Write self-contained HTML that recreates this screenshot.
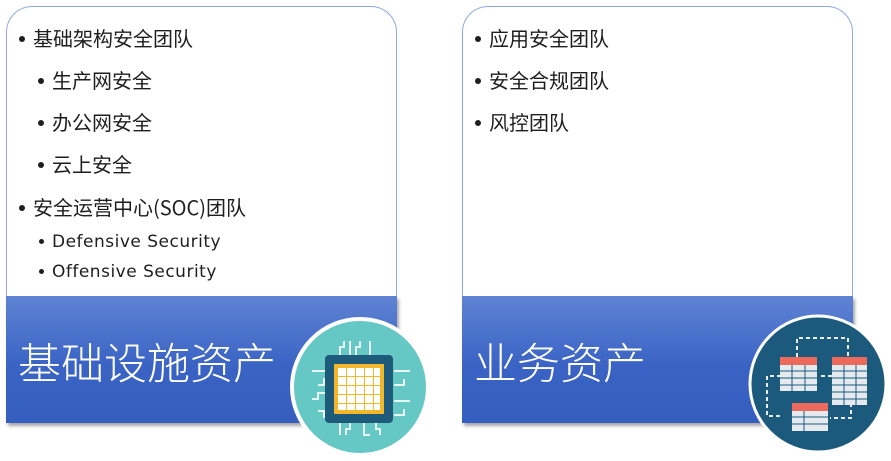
<!DOCTYPE html>
<html><head><meta charset="utf-8"><style>
*{margin:0;padding:0;box-sizing:border-box}
body{width:891px;height:461px;background:#fff;position:relative;overflow:hidden;font-family:"Liberation Sans","Noto Sans CJK SC",sans-serif;color:#1e1e1e}
.box{position:absolute;top:6px;width:391px;height:417px;border:1.5px solid #8fa8e0;border-radius:26px 26px 0 0;border-bottom:none;background:#fff}
.band{position:absolute;top:296px;width:391px;height:127px;background:linear-gradient(#5f84d4,#3a63c4 55%,#355ebf);box-shadow:2px 3px 3px rgba(0,0,0,.35)}
.band span{position:absolute;left:12px;top:34px;font-size:43px;color:#fff;font-family:"Noto Sans CJK SC",sans-serif;font-weight:300}
.t{position:absolute;white-space:nowrap;font-family:"Noto Sans CJK SC",sans-serif;font-size:20px;line-height:24px}
.t::before{content:"";position:absolute;left:-14px;top:10px;width:6px;height:6px;border-radius:50%;background:#1e1e1e}
.e{font-family:"DejaVu Sans",sans-serif;font-size:17px;letter-spacing:0.5px}
.e::before{top:9px;width:5px;height:5px;left:-13px}
</style></head><body>
<div class="box" style="left:6px"></div>
<div class="box" style="left:462px"></div>
<div class="t" style="left:33px;top:26px">基础架构安全团队</div>
<div class="t" style="left:52px;top:68px">生产网安全</div>
<div class="t" style="left:52px;top:110px">办公网安全</div>
<div class="t" style="left:52px;top:152px">云上安全</div>
<div class="t" style="left:33px;top:195px">安全运营中心(SOC)团队</div>
<div class="t e" style="left:52px;top:230px">Defensive Security</div>
<div class="t e" style="left:52px;top:260px">Offensive Security</div>
<div class="t" style="left:489px;top:26px">应用安全团队</div>
<div class="t" style="left:489px;top:68px">安全合规团队</div>
<div class="t" style="left:489px;top:110px">风控团队</div>
<div class="band" style="left:6px"><span>基础设施资产</span></div>
<div class="band" style="left:462px"><span>业务资产</span></div>
<svg style="position:absolute;left:290px;top:315px" width="142" height="146" viewBox="0 0 142 146">
<circle cx="70" cy="72" r="68" fill="#66c8c4" stroke="#fff" stroke-width="4"/>
<g stroke="#e8f6f5" stroke-width="2" fill="none">
<path d="M50 40v-8h4v-6M60 40v-14M66 40v-8h4v-6M80 40v-14M22 56h16M28 70h6v-6h6M22 84h6v-6h12M28 96h6v6h6M104 56h16M104 70h10v-6M104 86h16M104 100h10v-6"/>
<path d="M50 108v12M60 108v6h-4v6M74 108v12h6M86 108v6h4v6"/>
</g>
<rect x="35" y="40" width="68" height="68" rx="4" fill="#1e5a7a"/>
<rect x="44" y="49" width="50" height="50" fill="#f3b72b"/>
<g fill="#fff">
<rect x="48" y="53" width="8" height="8"/><rect x="57" y="53" width="8" height="8"/><rect x="66" y="53" width="8" height="8"/><rect x="75" y="53" width="8" height="8"/><rect x="84" y="53" width="6" height="8"/>
<rect x="48" y="62" width="8" height="8"/><rect x="57" y="62" width="8" height="8"/><rect x="66" y="62" width="8" height="8"/><rect x="75" y="62" width="8" height="8"/><rect x="84" y="62" width="6" height="8"/>
<rect x="48" y="71" width="8" height="8"/><rect x="57" y="71" width="8" height="8"/><rect x="66" y="71" width="8" height="8"/><rect x="75" y="71" width="8" height="8"/><rect x="84" y="71" width="6" height="8"/>
<rect x="48" y="80" width="8" height="8"/><rect x="57" y="80" width="8" height="8"/><rect x="66" y="80" width="8" height="8"/><rect x="75" y="80" width="8" height="8"/><rect x="84" y="80" width="6" height="8"/>
<rect x="48" y="89" width="8" height="6"/><rect x="57" y="89" width="8" height="6"/><rect x="66" y="89" width="8" height="6"/><rect x="75" y="89" width="8" height="6"/><rect x="84" y="89" width="6" height="6"/>
</g>
</svg>
<svg style="position:absolute;left:746px;top:313px" width="144" height="144" viewBox="0 0 144 144">
<circle cx="72" cy="71" r="68" fill="#1b5a7d" stroke="#fff" stroke-width="3"/>
<g stroke="#e8eef2" stroke-width="2" stroke-dasharray="4 3" fill="none">
<path d="M51 44V25h51v19M86 63H73M34 103H21V63h13M105 90v15H84"/>
</g>
<g>
<rect x="34" y="44" width="37" height="34" fill="#e4eaee"/><rect x="34" y="44" width="37" height="8" fill="#ec6a5c"/>
<path d="M34 58h37M34 65h37M34 72h37M46 52v26M59 52v26" stroke="#1b5a7d" stroke-width="1"/>
<rect x="86" y="44" width="35" height="48" fill="#e4eaee"/><rect x="86" y="44" width="35" height="8" fill="#ec6a5c"/>
<path d="M86 58h35M86 65h35M86 72h35M86 79h35M86 86h35M98 52v40M110 52v40" stroke="#1b5a7d" stroke-width="1"/>
<rect x="46" y="90" width="36" height="28" fill="#e4eaee"/><rect x="46" y="90" width="36" height="8" fill="#ec6a5c"/>
<path d="M46 104h36M46 111h36M58 98v20" stroke="#1b5a7d" stroke-width="1"/>
</g>
</svg>
</body></html>
